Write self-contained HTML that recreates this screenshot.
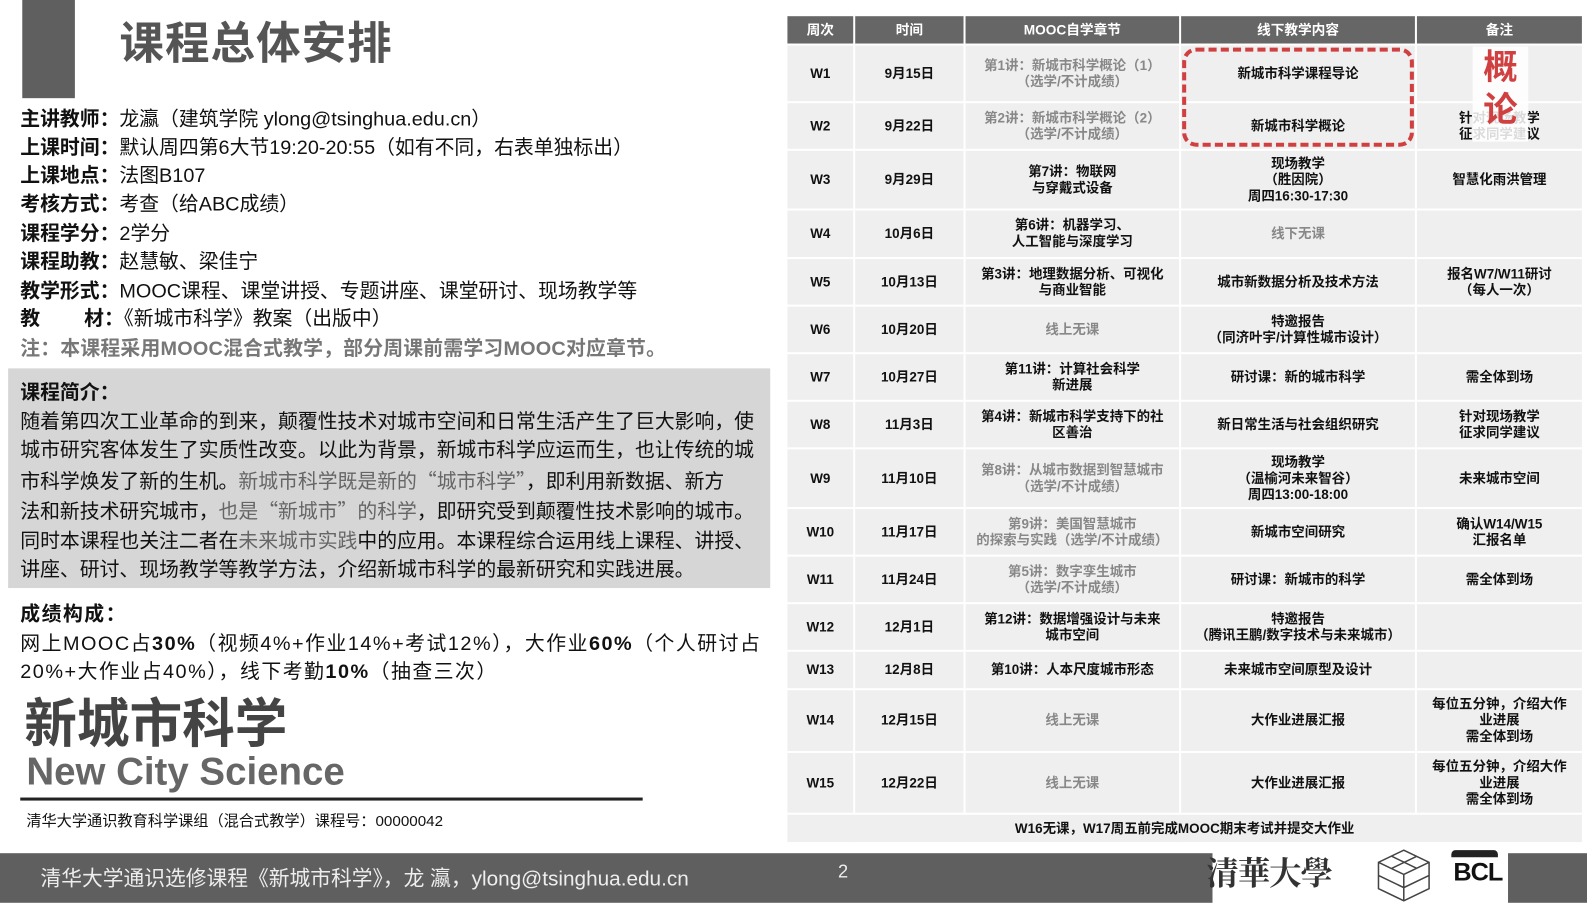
<!DOCTYPE html>
<html><head><meta charset="utf-8"><style>
*{margin:0;padding:0;box-sizing:border-box}
body{width:1587px;height:892px;position:relative;background:#fff;font-family:"Liberation Sans","Noto Sans CJK SC",sans-serif;color:#111;overflow:hidden}
#w{position:absolute;left:0;top:0;width:1568px;height:882px;transform:scale(1.0121);transform-origin:0 0}
.a{position:absolute;white-space:nowrap}
.l{font-size:19.6px;left:20px;line-height:28px}
b{font-weight:bold}
.q{font-family:"Noto Sans CJK SC",sans-serif}
table{position:absolute;left:776px;top:14px;border-collapse:collapse;font-size:13.3px;font-weight:bold;text-align:center;line-height:16px}
td,th{border:2px solid #fff;background:#efefef;padding:0}
th{background:#666;color:#fff;height:29px;font-size:13.5px}
.g{color:#888}
</style></head><body><div id="w">
<div class="a" style="left:22px;top:0;width:52px;height:97px;background:#5f5f5f"></div>
<div class="a" style="left:118px;top:7px;font-size:44px;font-weight:bold;color:#555;letter-spacing:1px">课程总体安排</div>
<div class="a l" style="top:104px"><b>主讲教师：</b>龙瀛（建筑学院 ylong@tsinghua.edu.cn）</div>
<div class="a l" style="top:132px"><b>上课时间：</b>默认周四第6大节19:20-20:55（如有不同，右表单独标出）</div>
<div class="a l" style="top:160px"><b>上课地点：</b>法图B107</div>
<div class="a l" style="top:188px"><b>考核方式：</b>考查（给ABC成绩）</div>
<div class="a l" style="top:217px"><b>课程学分：</b>2学分</div>
<div class="a l" style="top:245px"><b>课程助教：</b>赵慧敏、梁佳宁</div>
<div class="a l" style="top:274px"><b>教学形式：</b>MOOC课程、课堂讲授、专题讲座、课堂研讨、现场教学等</div>
<div class="a l" style="top:301px"><b>教&nbsp;&nbsp;&nbsp;&nbsp;&nbsp;&nbsp;&nbsp;&nbsp;材：</b>《新城市科学》教案（出版中）</div>
<div class="a l" style="top:331px;color:#777;font-weight:bold;letter-spacing:0.2px">注：本课程采用MOOC混合式教学，部分周课前需学习MOOC对应章节。</div>
<div class="a" style="left:8px;top:364px;width:753px;height:217px;background:#d6d6d6"></div>
<div class="a" style="left:20px;top:374px;font-size:19.6px;line-height:28.5px">
<b>课程简介：</b><br>随着第四次工业革命的到来，颠覆性技术对城市空间和日常生活产生了巨大影响，使<br>城市研究客体发生了实质性改变。以此为背景，新城市科学应运而生，也让传统的城<br>市科学焕发了新的生机。<span style="color:#666">新城市科学既是新的<span class="q">“</span>城市科学<span class="q">”</span></span>，即利用新数据、新方<br>法和新技术研究城市，<span style="color:#666">也是<span class="q">“</span>新城市<span class="q">”</span>的科学</span>，即研究受到颠覆性技术影响的城市。<br>同时本课程也关注二者在<span style="color:#666">未来城市实践</span>中的应用。本课程综合运用线上课程、讲授、<br>讲座、研讨、现场教学等教学方法，介绍新城市科学的最新研究和实践进展。</div>
<div class="a" style="left:20px;top:593px;font-size:19.6px;line-height:28.5px;letter-spacing:1.5px"><b>成绩构成：</b><br>网上MOOC占<b>30%</b>（视频4%+作业14%+考试12%），大作业<b>60%</b>（个人研讨占<br>20%+大作业占40%），线下考勤<b>10%</b>（抽查三次）</div>
<div class="a" style="left:24px;top:673px;font-size:52px;font-weight:bold;color:#444">新城市科学</div>
<div class="a" style="left:26px;top:742px;font-size:38px;font-weight:bold;color:#666">New City Science</div>
<div class="a" style="left:20px;top:788px;width:615px;height:3px;background:#222"></div>
<div class="a" style="left:26px;top:800px;font-size:15px">清华大学通识教育科学课组（混合式教学）课程号：00000042</div>
<div class="a" style="left:0;top:843px;width:1198px;height:49px;background:#5f5f5f"></div>
<div class="a" style="left:1490px;top:843px;width:97px;height:49px;background:#5f5f5f"></div>
<div class="a" style="left:40px;top:851px;font-size:20.5px;color:#eee">清华大学通识选修课程《新城市科学》，龙 瀛，ylong@tsinghua.edu.cn</div>
<div class="a" style="left:828px;top:851px;font-size:18px;color:#eee">2</div>
<div class="a" style="left:1192px;top:838px;font-size:32px;font-family:'Noto Serif CJK SC',serif;font-weight:bold;color:#333;letter-spacing:-1px">清華大學</div>
<svg class="a" style="left:1360px;top:838px" width="55" height="54" viewBox="0 0 55 54" fill="none" stroke="#444" stroke-width="1.5"><path d="M27 2 L52 14 L52 40 L27 52 L2 40 L2 14 Z M2 14 L27 26 L52 14 M27 26 L27 52 M15 8 L40 20 M40 8 L15 20 M2 27 L27 39 L52 27"/></svg>
<div class="a" style="left:1434px;top:840px;width:46px;height:7px;background:#222;border-radius:4px 4px 0 0"></div>
<div class="a" style="left:1436px;top:848px;font-size:25px;font-weight:bold;color:#111;letter-spacing:-1px">BCL</div>
<table>
<tr><th style="width:67px">周次</th><th style="width:109px">时间</th><th style="width:213px">MOOC自学章节</th><th style="width:233px">线下教学内容</th><th style="width:165px">备注</th></tr>
<tr style="height:57px"><td>W1</td><td>9月15日</td><td class="g">第1讲：新城市科学概论（1）<br>（选学/不计成绩）</td><td>新城市科学课程导论</td><td></td></tr>
<tr style="height:47px"><td>W2</td><td>9月22日</td><td class="g">第2讲：新城市科学概论（2）<br>（选学/不计成绩）</td><td>新城市科学概论</td><td>针对现场教学<br>征求同学建议</td></tr>
<tr style="height:59px"><td>W3</td><td>9月29日</td><td>第7讲：物联网<br>与穿戴式设备</td><td>现场教学<br>（胜因院）<br>周四16:30-17:30</td><td>智慧化雨洪管理</td></tr>
<tr style="height:48px"><td>W4</td><td>10月6日</td><td>第6讲：机器学习、<br>人工智能与深度学习</td><td class="g">线下无课</td><td></td></tr>
<tr style="height:47px"><td>W5</td><td>10月13日</td><td>第3讲：地理数据分析、可视化<br>与商业智能</td><td>城市新数据分析及技术方法</td><td>报名W7/W11研讨<br>（每人一次）</td></tr>
<tr style="height:47px"><td>W6</td><td>10月20日</td><td class="g">线上无课</td><td>特邀报告<br>（同济叶宇/计算性城市设计）</td><td></td></tr>
<tr style="height:47px"><td>W7</td><td>10月27日</td><td>第11讲：计算社会科学<br>新进展</td><td>研讨课：新的城市科学</td><td>需全体到场</td></tr>
<tr style="height:47px"><td>W8</td><td>11月3日</td><td>第4讲：新城市科学支持下的社<br>区善治</td><td>新日常生活与社会组织研究</td><td>针对现场教学<br>征求同学建议</td></tr>
<tr style="height:59px"><td>W9</td><td>11月10日</td><td class="g">第8讲：从城市数据到智慧城市<br>（选学/不计成绩）</td><td>现场教学<br>（温榆河未来智谷）<br>周四13:00-18:00</td><td>未来城市空间</td></tr>
<tr style="height:47px"><td>W10</td><td>11月17日</td><td class="g">第9讲：美国智慧城市<br>的探索与实践（选学/不计成绩）</td><td>新城市空间研究</td><td>确认W14/W15<br>汇报名单</td></tr>
<tr style="height:47px"><td>W11</td><td>11月24日</td><td class="g">第5讲：数字孪生城市<br>（选学/不计成绩）</td><td>研讨课：新城市的科学</td><td>需全体到场</td></tr>
<tr style="height:47px"><td>W12</td><td>12月1日</td><td>第12讲：数据增强设计与未来<br>城市空间</td><td>特邀报告<br>（腾讯王鹏/数字技术与未来城市）</td><td></td></tr>
<tr style="height:38px"><td>W13</td><td>12月8日</td><td>第10讲：人本尺度城市形态</td><td>未来城市空间原型及设计</td><td></td></tr>
<tr style="height:62px"><td>W14</td><td>12月15日</td><td class="g">线上无课</td><td>大作业进展汇报</td><td>每位五分钟，介绍大作<br>业进展<br>需全体到场</td></tr>
<tr style="height:61px"><td>W15</td><td>12月22日</td><td class="g">线上无课</td><td>大作业进展汇报</td><td>每位五分钟，介绍大作<br>业进展<br>需全体到场</td></tr>
<tr style="height:29px"><td colspan="5">W16无课，W17周五前完成MOOC期末考试并提交大作业</td></tr>
</table>
<div class="a" style="left:1168px;top:47px;width:229px;height:98px;border:4px dashed #d04040;border-radius:14px"></div>
<div class="a" style="left:1455px;top:46px;width:55px;height:94px;background:rgba(255,255,255,0.85);color:#d04040;font-size:34px;line-height:42px;text-align:center;font-weight:bold">概<br>论</div>
</div></body></html>
